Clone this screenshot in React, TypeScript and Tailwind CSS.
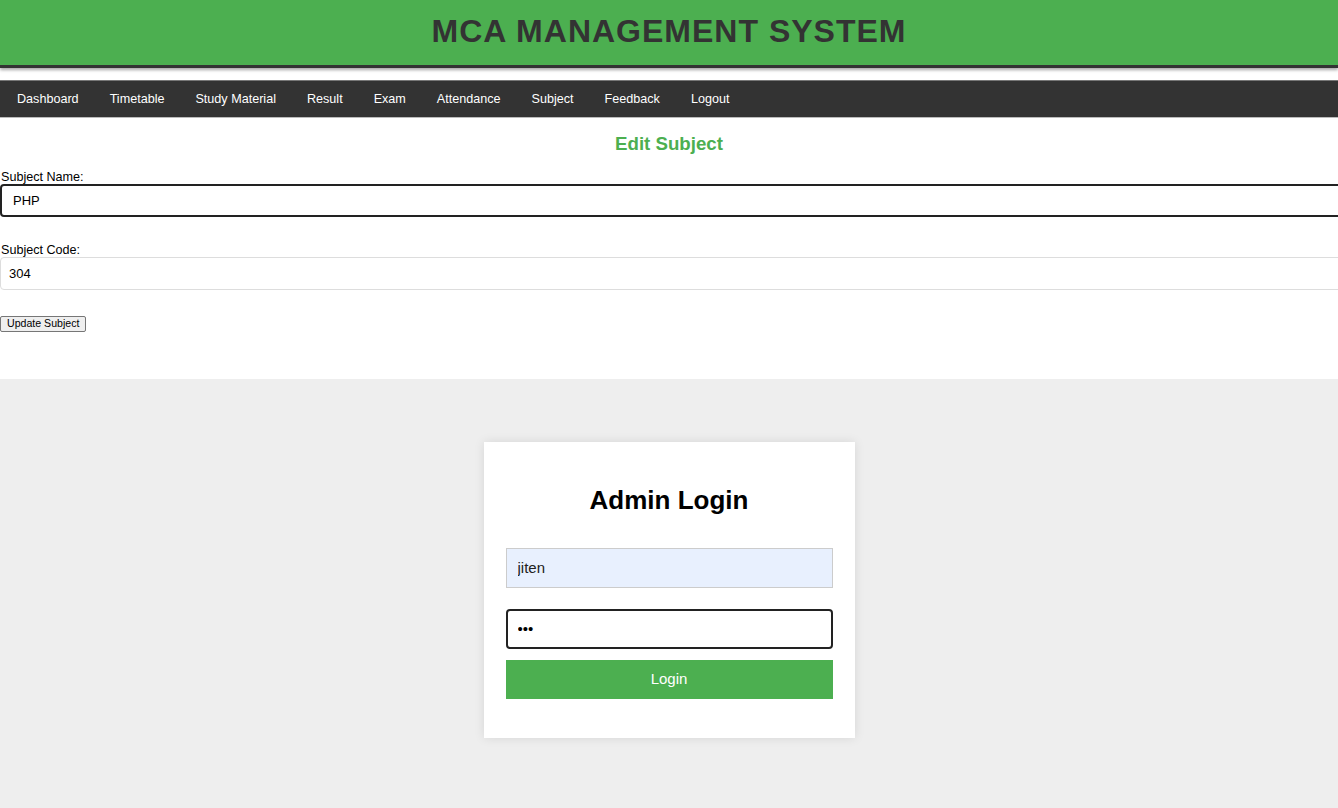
import React from 'react';

const navItems = [
  'Dashboard',
  'Timetable',
  'Study Material',
  'Result',
  'Exam',
  'Attendance',
  'Subject',
  'Feedback',
  'Logout',
];

export default function App() {
  return (
    <div className="min-h-[808px] bg-[#eeeeee] overflow-hidden font-['Liberation_Sans',Arial,sans-serif] text-black">
      {/* Top admin panel */}
      <div className="bg-white">
        <header className="h-[68px] bg-[#4CAF50] border-b-[3px] border-[#333] shadow-[0_2px_3px_rgba(0,0,0,0.35)] flex items-center justify-center pb-[4px]">
          <h1 className="text-[32px] font-bold tracking-[1px] text-[#333] leading-none">
            MCA MANAGEMENT SYSTEM
          </h1>
        </header>

        <nav className="mt-[12px] h-[38px] bg-[#333] border-t border-[#777] border-b border-b-[#bbb] flex items-center">
          {navItems.map((item) => (
            <a key={item} href="#" className="px-[15.5px] first:pl-[17px] text-[12.6px] text-white">
              {item}
            </a>
          ))}
        </nav>

        <div className="pb-[47px]">
          <h3 className="text-center text-[18.7px] font-bold text-[#4CAF50] leading-none pt-[17px] pb-[16px]">
            Edit Subject
          </h3>

          <form className="text-[12.6px]">
            <label className="block leading-[14px] pl-[1px]">Subject Name:</label>
            <input
              type="text"
              defaultValue="PHP"
              className="block w-[calc(100%+20px)] h-[33px] px-[11px] border-2 border-[#222] rounded-[4px] text-[13px] bg-white outline-none"
            />
            <label className="block mt-[26px] leading-[14px] pl-[1px]">Subject Code:</label>
            <input
              type="text"
              defaultValue="304"
              className="block w-[calc(100%+20px)] h-[33px] px-[8px] border border-[#ddd] rounded-[4px] text-[13px] bg-white outline-none"
            />
            <button
              type="button"
              className="mt-[26px] block h-[16px] px-[6px] text-[10.6px] leading-none bg-[#efefef] border border-[#767676] rounded-[2px]"
            >
              Update Subject
            </button>
          </form>
        </div>
      </div>

      {/* Login card */}
      <div className="flex justify-center pt-[63px]">
        <div className="w-[371px] bg-white shadow-[0_0_10px_rgba(0,0,0,0.1)] px-[22px] pt-[43px] pb-[39px]">
          <h2 className="text-center text-[26px] font-bold leading-[30px]">Admin Login</h2>
          <input
            type="text"
            defaultValue="jiten"
            className="mt-[33px] block w-full h-[40px] px-[11px] bg-[#e8f0fe] border border-[#ccc] text-[15px] text-[#222] outline-none"
          />
          <input
            type="password"
            defaultValue="abc"
            className="mt-[21px] block w-full h-[40px] px-[10px] bg-white border-2 border-[#222] rounded-[4px] text-[15px] outline-none"
          />
          <button
            type="button"
            className="mt-[11px] block w-full h-[39px] bg-[#4CAF50] text-white text-[15px]"
          >
            Login
          </button>
        </div>
      </div>
    </div>
  );
}
